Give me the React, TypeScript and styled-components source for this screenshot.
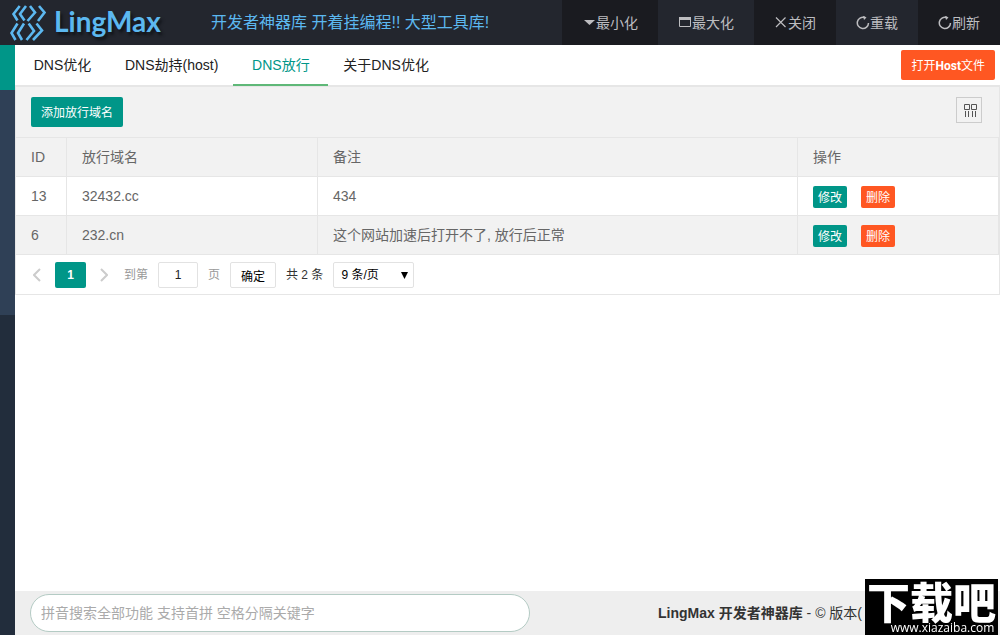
import React from "react";
import styled, { createGlobalStyle, css } from "styled-components";

const GlobalStyle = createGlobalStyle`
  *, *::before, *::after { box-sizing: border-box; }
  body {
    margin: 0;
    background: #fff;
    color: #333;
    font: 14px/24px "Liberation Sans", "Noto Sans CJK SC", sans-serif;
  }
  button, input, select { margin: 0; font-family: inherit; }
  button { cursor: pointer; }
  a { color: inherit; text-decoration: none; }
`;

const teal = "#009688";
const orange = "#ff5722";
const line = "#e6e6e6";

const Page = styled.div`
  display: flex;
  flex-direction: column;
  min-height: 100vh;
`;

const Header = styled.header`
  display: flex;
  align-items: stretch;
  height: 45px;
  background: #23262e;
`;

const Brand = styled.a`
  display: flex;
  align-items: center;
  width: 211px;
  padding-left: 9px;
  gap: 7px;
`;

const BrandName = styled.span`
  padding-bottom: 4px;
  color: #5cb8f0;
  font: 700 28px/40px Lato, sans-serif;
  text-shadow: 2px 3px 3px #101318;
`;

const Slogan = styled.p`
  flex: 1;
  margin: 0;
  color: #5cb8f0;
  font-size: 16px;
  line-height: 46px;
  white-space: nowrap;
`;

const WindowNav = styled.nav`
  display: flex;
`;

const WindowButton = styled.button`
  display: flex;
  align-items: center;
  padding: 1px 20px 0;
  border: 0;
  background: #23262e;
  color: #bdbdc0;
  font-size: 14px;
  line-height: 44px;
  white-space: nowrap;
  &:nth-child(odd) { background: #1a1b20; }
`;

const Body = styled.div`
  display: flex;
  flex: 1;
`;

const Sidebar = styled.aside`
  display: flex;
  flex-direction: column;
  width: 15px;
  background: #222d3c;
`;

const SideBand = styled.div<{ $tone: string; $rows: number }>`
  height: ${(p) => p.$rows * 45}px;
  background: ${(p) => p.$tone};
`;

const Main = styled.main`
  display: flex;
  flex: 1;
  flex-direction: column;
  min-width: 0;
`;

const TabBar = styled.div`
  display: flex;
  justify-content: space-between;
  height: 42px;
  padding-right: 5px;
  border-bottom: 2px solid ${line};
`;

const Tabs = styled.div`
  display: flex;
`;

const Tab = styled.button<{ $active?: boolean }>`
  height: 41px;
  min-width: 95px;
  padding: 0 15px 2px;
  border: 0;
  background: none;
  color: #222;
  font-size: 14px;
  line-height: 38px;
  white-space: nowrap;
  ${(p) =>
    p.$active &&
    css`
      color: ${teal};
      box-shadow: inset 0 -2px #5fb878;
    `}
`;

const ActionButton = styled.button<{ $tone: string; $small?: boolean }>`
  height: ${(p) => (p.$small ? 22 : 30)}px;
  padding: 2px ${(p) => (p.$small ? 5 : 10)}px 0;
  border: 0;
  border-radius: 2px;
  background: ${(p) => p.$tone};
  color: #fff;
  font-size: 12px;
  line-height: 20px;
  white-space: nowrap;
  b { font-family: Roboto, sans-serif; }
`;

const TabAction = styled.div`
  padding-top: 5px;
  line-height: 0;
`;

const Panel = styled.section`
  border: solid ${line};
  border-width: 0 1px 1px;
`;

const Toolbar = styled.div`
  display: flex;
  justify-content: space-between;
  height: 50px;
  padding: 10px 17px 0 15px;
  background: #f2f2f2;
`;

const ColumnsButton = styled.button`
  display: flex;
  align-items: center;
  justify-content: center;
  width: 26px;
  height: 26px;
  padding: 1px 0 0 3px;
  border: 1px solid #ccc;
  background: none;
`;

const Table = styled.table`
  width: 100%;
  table-layout: fixed;
  border-collapse: separate;
  border-spacing: 0;
  border-top: 1px solid ${line};
  color: #666;
`;

const Col = styled.col<{ $width?: number }>`
  width: ${(p) => (p.$width ? `${p.$width}px` : "auto")};
`;

const cell = css`
  height: 39px;
  padding: 0 15px;
  border: solid ${line};
  border-width: 0 1px 1px 0;
  font-weight: 400;
  text-align: left;
  white-space: nowrap;
`;

const Th = styled.th`
  ${cell}
  background: #f2f2f2;
`;

const Row = styled.tr`
  &:nth-child(even) { background: #f2f2f2; }
`;

const Td = styled.td`
  ${cell}
`;

const RowActions = styled.div`
  display: flex;
  gap: 14px;
  padding-top: 2px;
`;

const Pager = styled.div`
  display: flex;
  align-items: center;
  height: 39px;
  padding-left: 9px;
  gap: 10px;
  color: #999;
  font-size: 12px;
`;

const PageArrow = styled.button`
  display: flex;
  align-items: center;
  justify-content: center;
  width: 24px;
  height: 26px;
  padding: 0;
  border: 0;
  background: none;
  color: #ccc;
`;

const PageGroup = styled.div`
  display: flex;
  align-items: center;
  margin-right: -2px;
  gap: 6px;
`;

const CurrentPage = styled.button`
  width: 31px;
  height: 26px;
  padding: 0;
  border: 0;
  border-radius: 2px;
  background: ${teal};
  color: #fff;
  font-size: 12px;
  font-weight: 700;
`;

const JumpLabel = styled.label`
  display: flex;
  align-items: center;
  gap: 10px;
`;

const control = css`
  height: 26px;
  border: 1px solid #e2e2e2;
  border-radius: 2px;
  background: #fff;
  color: #222;
  font-size: 12px;
`;

const JumpInput = styled.input`
  ${control}
  width: 40px;
  padding: 0;
  text-align: center;
`;

const ConfirmButton = styled.button`
  ${control}
  width: 46px;
  padding: 1px 0 0;
  color: #000;
`;

const Total = styled.span`
  color: #333;
`;

const SizeBox = styled.label`
  position: relative;
  display: flex;
`;

const SizeSelect = styled.select`
  ${control}
  width: 81px;
  padding: 0 7px;
  appearance: none;
  color: #000;
`;

const SizeArrow = styled.svg`
  position: absolute;
  top: 10px;
  right: 6px;
  pointer-events: none;
`;

const Footer = styled.footer`
  display: flex;
  align-items: center;
  justify-content: space-between;
  height: 44px;
  margin-top: auto;
  padding: 0 138px 0 15px;
  background: #eee;
`;

const Search = styled.input`
  width: 500px;
  height: 38px;
  padding: 0 10px;
  border: 1px solid #b4cbc4;
  border-radius: 19px;
  background: #fff;
  font-size: 14px;
  &::placeholder { color: #aaa; }
`;

const Copyright = styled.p`
  margin: 0;
  white-space: nowrap;
`;

const Stamp = styled.div`
  position: fixed;
  right: 2px;
  bottom: 0;
  width: 133px;
  height: 56px;
  background: #000;
  color: #fff;
  text-align: center;
`;

const StampTitle = styled.div`
  font: 900 43px/42px "Noto Sans CJK SC", sans-serif;
  white-space: nowrap;
`;

const StampUrl = styled.div`
  font: 12px/14px "Open Sans", sans-serif;
  padding-left: 22px;
`;

const LogoMark = () => (
  <svg width="38" height="38" viewBox="0 0 38 38" fill="none" stroke="#5cb8f0" strokeWidth="2.600" aria-hidden="true">
    <path d="M10.700 2 4.500 10l4 6.500M17 2l-6 8 4.500 6.500M21 2l5 6.500-7.500 8.500M30 2l5.500 6.500L29 17" />
    <path d="M8.500 19.500 2.500 29l4 7M15 19.500 9 29l4 7M19.700 19.500 25 27l-7.500 9M27.500 19.500 33 26.500 24 36" />
  </svg>
);

const MinimizeIcon = () => (
  <svg width="14" height="14" viewBox="0 0 14 14" fill="currentColor" aria-hidden="true">
    <path d="M2 4h11L7.500 9z" />
  </svg>
);

const MaximizeIcon = () => (
  <svg width="14" height="14" viewBox="0 0 14 14" aria-hidden="true">
    <path d="M1.500 1.500h11v9h-11z" fill="none" stroke="currentColor" />
    <path d="M1 1h12v3H1z" fill="currentColor" />
  </svg>
);

const CloseIcon = () => (
  <svg width="14" height="14" viewBox="0 0 14 14" fill="none" stroke="currentColor" strokeWidth="1.200" aria-hidden="true">
    <path d="M2 1.500 11.500 11M11.500 1.500 2 11" />
  </svg>
);

const ReloadIcon = () => (
  <svg width="14" height="14" viewBox="0 0 14 14" fill="none" stroke="currentColor" strokeWidth="1.500" aria-hidden="true">
    <path d="M8.500 1.500A5.600 5.600 0 1 0 12.500 7" />
    <path d="M7-.500 10.500 1.500 8 4z" fill="currentColor" stroke="none" />
  </svg>
);

const ColumnsIcon = () => (
  <svg width="13" height="14" viewBox="0 0 13 14" fill="none" stroke="#555" aria-hidden="true">
    <path d="M.5.5h5v5h-5zM7.500.5h5v5h-5z" />
    <path d="M1.500 7v6M4.500 7v6M8.500 7v6M11.500 7v6" />
  </svg>
);

const Chevron = ({ d }: { d: string }) => (
  <svg width="8" height="14" viewBox="0 0 8 14" fill="none" stroke="currentColor" strokeWidth="2" aria-hidden="true">
    <path d={d} />
  </svg>
);

const windowButtons = [
  { label: "最小化", icon: <MinimizeIcon /> },
  { label: "最大化", icon: <MaximizeIcon /> },
  { label: "关闭", icon: <CloseIcon /> },
  { label: "重载", icon: <ReloadIcon /> },
  { label: "刷新", icon: <ReloadIcon /> },
];

const tabs = ["DNS优化", "DNS劫持(host)", "DNS放行", "关于DNS优化"];

const rows = [
  { id: 13, domain: "32432.cc", note: "434" },
  { id: 6, domain: "232.cn", note: "这个网站加速后打开不了, 放行后正常" },
];

export default function App() {
  return (
    <Page>
      <GlobalStyle />
      <Header>
        <Brand href="#">
          <LogoMark />
          <BrandName>LingMax</BrandName>
        </Brand>
        <Slogan>开发者神器库 开着挂编程!! 大型工具库!</Slogan>
        <WindowNav>
          {windowButtons.map((b) => (
            <WindowButton key={b.label} type="button">
              {b.icon}
              {b.label}
            </WindowButton>
          ))}
        </WindowNav>
      </Header>
      <Body>
        <Sidebar>
          <SideBand $tone={teal} $rows={1} />
          <SideBand $tone="#2f4056" $rows={5} />
        </Sidebar>
        <Main>
          <TabBar>
            <Tabs role="tablist">
              {tabs.map((t) => (
                <Tab key={t} type="button" role="tab" aria-selected={t === "DNS放行"} $active={t === "DNS放行"}>
                  {t}
                </Tab>
              ))}
            </Tabs>
            <TabAction>
              <ActionButton type="button" $tone={orange}>
                打开<b>Host</b>文件
              </ActionButton>
            </TabAction>
          </TabBar>
          <Panel>
            <Toolbar>
              <ActionButton type="button" $tone={teal}>添加放行域名</ActionButton>
              <ColumnsButton type="button" aria-label="筛选列">
                <ColumnsIcon />
              </ColumnsButton>
            </Toolbar>
            <Table>
              <colgroup>
                <Col $width={51} />
                <Col $width={251} />
                <Col />
                <Col $width={201} />
              </colgroup>
              <thead>
                <tr>
                  <Th>ID</Th>
                  <Th>放行域名</Th>
                  <Th>备注</Th>
                  <Th>操作</Th>
                </tr>
              </thead>
              <tbody>
                {rows.map((r) => (
                  <Row key={r.id}>
                    <Td>{r.id}</Td>
                    <Td>{r.domain}</Td>
                    <Td>{r.note}</Td>
                    <Td>
                      <RowActions>
                        <ActionButton type="button" $small $tone={teal}>修改</ActionButton>
                        <ActionButton type="button" $small $tone={orange}>删除</ActionButton>
                      </RowActions>
                    </Td>
                  </Row>
                ))}
              </tbody>
            </Table>
            <Pager>
              <PageGroup>
                <PageArrow type="button" aria-label="上一页"><Chevron d="M7 1 1 7l6 6" /></PageArrow>
                <CurrentPage type="button">1</CurrentPage>
                <PageArrow type="button" aria-label="下一页"><Chevron d="M1 1l6 6-6 6" /></PageArrow>
              </PageGroup>
              <JumpLabel>
                到第
                <JumpInput defaultValue="1" />
                页
              </JumpLabel>
              <ConfirmButton type="button">确定</ConfirmButton>
              <Total>共 2 条</Total>
              <SizeBox>
                <SizeSelect aria-label="每页条数">
                  <option>9 条/页</option>
                </SizeSelect>
                <SizeArrow width="7" height="7" viewBox="0 0 7 7">
                  <path d="M0 0h7L3.500 7z" />
                </SizeArrow>
              </SizeBox>
            </Pager>
          </Panel>
          <Footer>
            <Search aria-label="搜索" placeholder="拼音搜索全部功能 支持首拼 空格分隔关键字" />
            <Copyright>
              <b>LingMax 开发者神器库</b> - © 版本(
            </Copyright>
          </Footer>
        </Main>
      </Body>
      <Stamp>
        <StampTitle>下载吧</StampTitle>
        <StampUrl>www.xiazaiba.com</StampUrl>
      </Stamp>
    </Page>
  );
}
